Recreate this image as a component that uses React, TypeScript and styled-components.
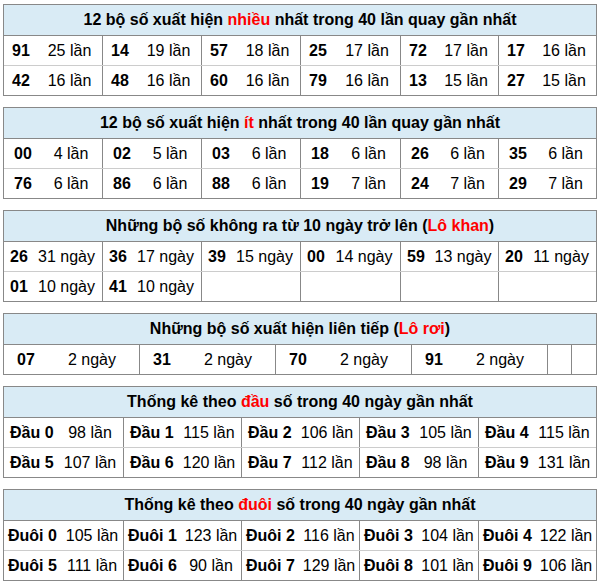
import React from "react";
import styled, { createGlobalStyle } from "styled-components";

const Global = createGlobalStyle`
  html, body { margin: 0; padding: 0; background: #fff; }
  body { font-family: "Liberation Sans", Arial, sans-serif; color: #000; }
  * { box-sizing: border-box; }
`;

const Page = styled.div`
  display: flex;
  flex-direction: column;
  gap: 11px;
  padding: 4px 0 0 3px;
  width: 597px;
`;

const Table = styled.section`
  width: 594px;
  border: 1px solid #888;
  display: flex;
  flex-direction: column;
`;

const Header = styled.div`
  height: 31px;
  display: flex;
  align-items: center;
  justify-content: center;
  background: #d9ebf5;
  font-weight: bold;
  font-size: 16px;
  border-bottom: 1px solid #888;
  white-space: nowrap;
`;

const Title = styled.span`
  display: block;
`;

const Red = styled.span`
  color: #ff0000;
`;

const Row = styled.div<{ $cols: string }>`
  display: grid;
  grid-template-columns: ${(p) => p.$cols};
  height: 29px;
  & + & {
    height: 30px;
    border-top: 1px solid #ccc;
  }
`;

const Cell = styled.div<{ $numW: number; $pad: number }>`
  display: grid;
  grid-template-columns: ${(p) => p.$numW}px 1fr;
  align-items: center;
  font-size: 16px;
  & > span:first-child {
    padding-left: ${(p) => p.$pad}px;
  }
  & + & {
    border-left: 1px solid #888;
  }
`;

const Num = styled.span`
  font-weight: bold;
  white-space: nowrap;
`;

const Count = styled.span`
  text-align: center;
  white-space: nowrap;
`;

type Pair = [string, string] | null;

interface Spec {
  title: React.ReactNode;
  cols: string;
  numW: number;
  pad: number;
  rows: Pair[][];
}

const lan = (n: number) => `${n} lần`;
const ngay = (n: number) => `${n} ngày`;

const specs: Spec[] = [
  {
    title: (
      <>
        12 bộ số xuất hiện <Red>nhiều</Red> nhất trong 40 lần quay gần nhất
      </>
    ),
    cols: "98px 99px 99px 100px 98px 98px",
    numW: 33,
    pad: 8,
    rows: [
      [["91", lan(25)], ["14", lan(19)], ["57", lan(18)], ["25", lan(17)], ["72", lan(17)], ["17", lan(16)]],
      [["42", lan(16)], ["48", lan(16)], ["60", lan(16)], ["79", lan(16)], ["13", lan(15)], ["27", lan(15)]],
    ],
  },
  {
    title: (
      <>
        12 bộ số xuất hiện <Red>ít</Red> nhất trong 40 lần quay gần nhất
      </>
    ),
    cols: "98px 99px 99px 100px 98px 98px",
    numW: 36,
    pad: 10,
    rows: [
      [["00", lan(4)], ["02", lan(5)], ["03", lan(6)], ["18", lan(6)], ["26", lan(6)], ["35", lan(6)]],
      [["76", lan(6)], ["86", lan(6)], ["88", lan(6)], ["19", lan(7)], ["24", lan(7)], ["29", lan(7)]],
    ],
  },
  {
    title: (
      <>
        Những bộ số không ra từ 10 ngày trở lên (<Red>Lô khan</Red>)
      </>
    ),
    cols: "98px 99px 99px 100px 98px 98px",
    numW: 27,
    pad: 6,
    rows: [
      [["26", ngay(31)], ["36", ngay(17)], ["39", ngay(15)], ["00", ngay(14)], ["59", ngay(13)], ["20", ngay(11)]],
      [["01", ngay(10)], ["41", ngay(10)], null, null, null, null],
    ],
  },
  {
    title: (
      <>
        Những bộ số xuất hiện liên tiếp (<Red>Lô rơi</Red>)
      </>
    ),
    cols: "135px 136px 136px 136px 24px 25px",
    numW: 41,
    pad: 13,
    rows: [[["07", ngay(2)], ["31", ngay(2)], ["70", ngay(2)], ["91", ngay(2)], null, null]],
  },
  {
    title: (
      <>
        Thống kê theo <Red>đầu</Red> số trong 40 ngày gần nhất
      </>
    ),
    cols: "119px 118px 118px 119px 118px",
    numW: 53,
    pad: 6,
    rows: [
      [["Đầu 0", lan(98)], ["Đầu 1", lan(115)], ["Đầu 2", lan(106)], ["Đầu 3", lan(105)], ["Đầu 4", lan(115)]],
      [["Đầu 5", lan(107)], ["Đầu 6", lan(120)], ["Đầu 7", lan(112)], ["Đầu 8", lan(98)], ["Đầu 9", lan(131)]],
    ],
  },
  {
    title: (
      <>
        Thống kê theo <Red>đuôi</Red> số trong 40 ngày gần nhất
      </>
    ),
    cols: "119px 118px 118px 119px 118px",
    numW: 57,
    pad: 4,
    rows: [
      [["Đuôi 0", lan(105)], ["Đuôi 1", lan(123)], ["Đuôi 2", lan(116)], ["Đuôi 3", lan(104)], ["Đuôi 4", lan(122)]],
      [["Đuôi 5", lan(111)], ["Đuôi 6", lan(90)], ["Đuôi 7", lan(129)], ["Đuôi 8", lan(101)], ["Đuôi 9", lan(106)]],
    ],
  },
];

export default function App() {
  return (
    <>
      <Global />
      <Page>
        {specs.map((s, ti) => (
          <Table key={ti}>
            <Header>
              <Title>{s.title}</Title>
            </Header>
            {s.rows.map((row, ri) => (
              <Row key={ri} $cols={s.cols}>
                {row.map((pair, ci) => (
                  <Cell key={ci} $numW={s.numW} $pad={s.pad}>
                    {pair && (
                      <>
                        <Num>{pair[0]}</Num>
                        <Count>{pair[1]}</Count>
                      </>
                    )}
                  </Cell>
                ))}
              </Row>
            ))}
          </Table>
        ))}
      </Page>
    </>
  );
}
